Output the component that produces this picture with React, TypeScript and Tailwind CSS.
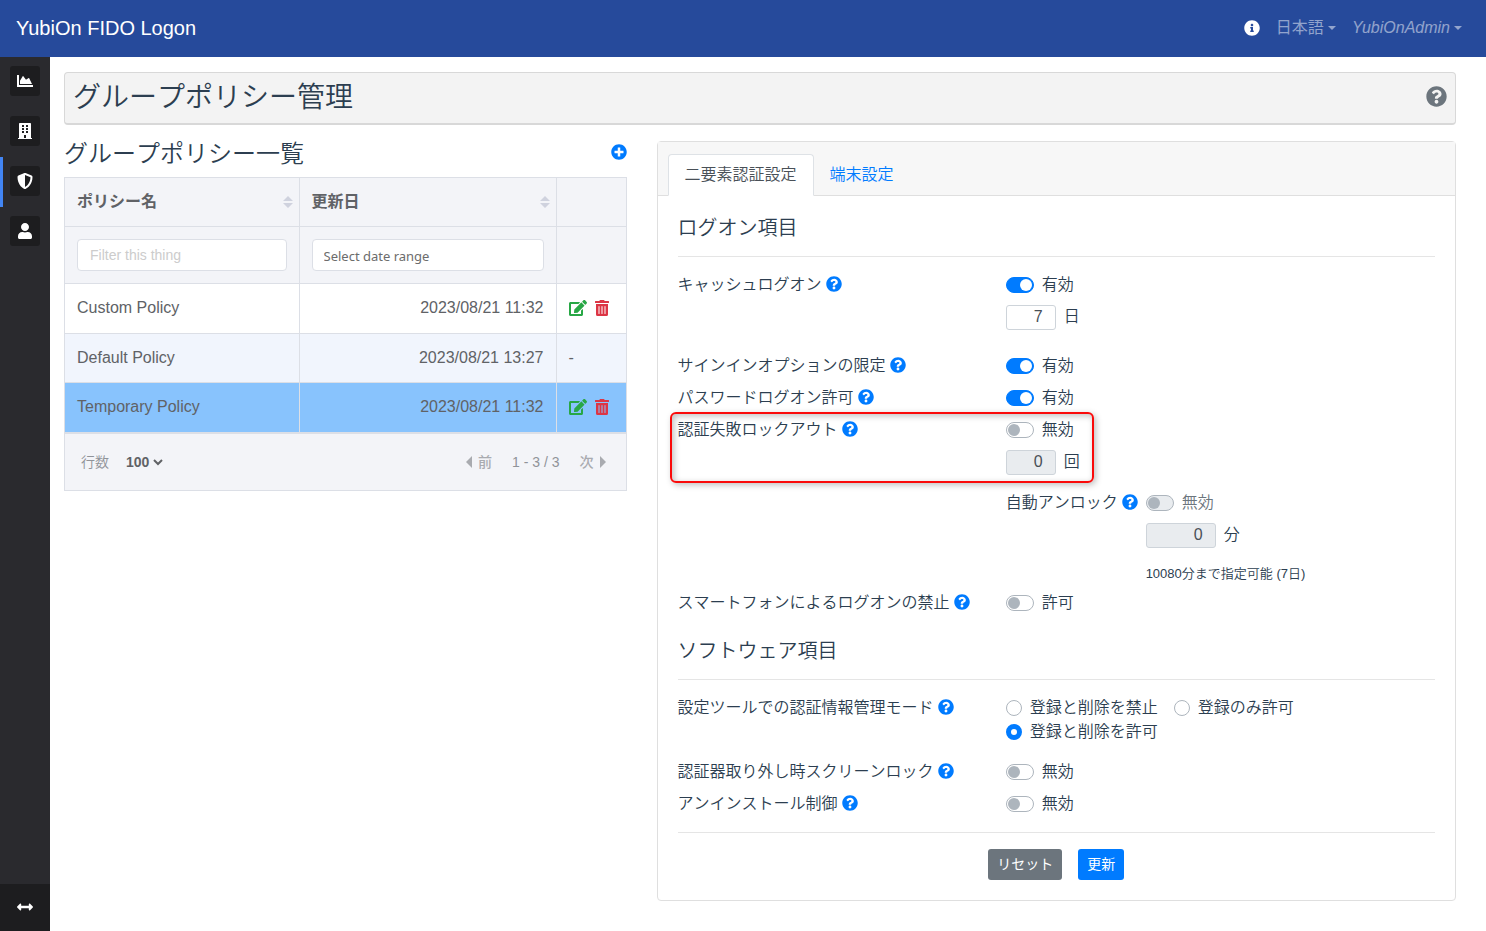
import { useId, useState } from "react"
import type { ReactNode } from "react"
import clsx from "clsx"
import {
  FaArrowsAltH,
  FaBuilding,
  FaChartArea,
  FaEdit,
  FaInfoCircle,
  FaPlusCircle,
  FaQuestionCircle,
  FaShieldAlt,
  FaTrashAlt,
  FaUser,
} from "react-icons/fa"

interface Policy {
  name: string
  updated: string
  editable: boolean
}

const policies: Policy[] = [
  { name: "Custom Policy", updated: "2023/08/21 11:32", editable: true },
  { name: "Default Policy", updated: "2023/08/21 13:27", editable: false },
  { name: "Temporary Policy", updated: "2023/08/21 11:32", editable: true },
]

const navItems = [
  { label: "ダッシュボード", icon: FaChartArea },
  { label: "組織", icon: FaBuilding },
  { label: "グループポリシー", icon: FaShieldAlt },
  { label: "ユーザー", icon: FaUser },
]

const modes = ["登録と削除を禁止", "登録のみ許可", "登録と削除を許可"]

function Caret() {
  return (
    <svg width="8" height="4" viewBox="0 0 8 4" fill="currentColor">
      <path d="M0 0h8L4 4z" />
    </svg>
  )
}

function SortIcon() {
  return (
    <svg width="10" height="12" viewBox="0 0 10 12" fill="#cfd2de">
      <path d="M0 5h10L5 0zM0 7h10L5 12z" />
    </svg>
  )
}

function Header() {
  return (
    <header className="flex h-[57px] shrink-0 items-center bg-[#264a9b] pb-0.5 pl-4 pr-6">
      <a href="#" className="text-xl text-white">
        YubiOn FIDO Logon
      </a>
      <div className="ml-auto flex items-center gap-4 text-white/50">
        <button type="button" aria-label="情報" className="text-white">
          <FaInfoCircle size={16} />
        </button>
        <button type="button" className="flex items-center gap-1">
          日本語
          <Caret />
        </button>
        <button type="button" className="flex items-center gap-1 italic">
          YubiOnAdmin
          <Caret />
        </button>
      </div>
    </header>
  )
}

function Sidebar() {
  return (
    <nav className="flex w-[50px] shrink-0 flex-col bg-[#2a2a2e]">
      {navItems.map(({ label, icon: Icon }, i) => (
        <a
          key={label}
          href="#"
          aria-label={label}
          className={clsx(
            "flex h-[50px] justify-center border-l-3 pr-[3px] pt-[9px] text-white",
            i === 2 ? "border-[#4285f4]" : "border-transparent",
          )}
        >
          <span className="flex size-[30px] shrink-0 items-center justify-center rounded-[3px] bg-[#1d1d1f]">
            <Icon size={16} />
          </span>
        </a>
      ))}
      <button
        type="button"
        aria-label="メニューを開く"
        className="mt-auto flex h-[47px] items-center justify-center bg-[#1d1d1f] pb-0.5 text-white"
      >
        <FaArrowsAltH size={16} />
      </button>
    </nav>
  )
}

function PolicyTable() {
  return (
    <div className="text-[#606266]">
      <table className="w-full table-fixed border-collapse border border-[#dcdfe6]">
        <colgroup>
          <col />
          <col className="w-[257px]" />
          <col className="w-[70px]" />
        </colgroup>
        <thead className="bg-[#f3f4f8]">
          <tr className="h-[49px]">
            {["ポリシー名", "更新日"].map((title) => (
              <th key={title} className="border border-[#dcdfe6] pl-3 pr-1.5 text-left font-bold">
                <button type="button" className="flex w-full items-center justify-between">
                  {title}
                  <SortIcon />
                </button>
              </th>
            ))}
            <th className="border border-[#dcdfe6]" />
          </tr>
          <tr className="h-[57px]">
            <th className="border border-[#dcdfe6] px-3">
              <input
                type="text"
                aria-label="ポリシー名"
                placeholder="Filter this thing"
                className="block h-8 w-full rounded border border-[#dcdfe6] bg-white px-3 text-sm font-normal placeholder:text-[#ccc]"
              />
            </th>
            <th className="border border-[#dcdfe6] px-3">
              <input
                type="text"
                aria-label="更新日"
                placeholder="Select date range"
                className="block h-8 w-full rounded border border-[#dcdfe6] bg-white px-[11px] pt-0.5 font-['Noto_Sans',sans-serif] text-[13px] font-normal placeholder:text-[#6c6c6c]"
              />
            </th>
            <th className="border border-[#dcdfe6]" />
          </tr>
        </thead>
        <tbody>
          {policies.map((policy, i) => (
            <tr
              key={policy.name}
              className={clsx(
                i === 0 && "h-[50px]",
                i === 1 && "h-[49px] bg-[#f1f5fd]",
                i === 2 && "h-[50px] bg-[#88c3fd]",
              )}
            >
              <td className="border border-[#dcdfe6] px-3 pb-px">{policy.name}</td>
              <td className="border border-[#dcdfe6] px-3 pb-px text-right">{policy.updated}</td>
              <td className="border border-[#dcdfe6] px-3 pb-px">
                {policy.editable ? (
                  <div className="flex items-center gap-2">
                    <button type="button" aria-label="編集" className="text-[#28a745]">
                      <FaEdit className="h-4 w-[18px]" />
                    </button>
                    <button type="button" aria-label="削除" className="text-[#dc3545]">
                      <FaTrashAlt className="h-4 w-3.5" />
                    </button>
                  </div>
                ) : (
                  "-"
                )}
              </td>
            </tr>
          ))}
        </tbody>
      </table>

      <div className="flex h-[58px] items-center border border-[#dcdfe6] bg-[#f3f4f8] pl-4 pr-5 text-sm text-[#909399]">
        <label htmlFor="rows">行数</label>
        <select id="rows" className="ml-[13px] font-bold text-[#606266]">
          <option>100</option>
        </select>
        <button type="button" className="ml-auto flex items-center gap-1.5 font-medium text-[#a9abb0]">
          <svg width="6" height="12" viewBox="0 0 6 12" fill="currentColor">
            <path d="M6 0v12L0 6z" />
          </svg>
          前
        </button>
        <span className="mx-5">1 - 3 / 3</span>
        <button type="button" className="flex items-center gap-1.5 font-medium text-[#a9abb0]">
          次
          <svg width="6" height="12" viewBox="0 0 6 12" fill="currentColor">
            <path d="M0 0v12l6-6z" />
          </svg>
        </button>
      </div>
    </div>
  )
}

function Help() {
  return (
    <button type="button" aria-label="ヘルプ" className="mb-0.5 ml-1 shrink-0 text-[#007bff]">
      <FaQuestionCircle size={16} />
    </button>
  )
}

interface SwitchProps {
  label: string
  on?: boolean
  disabled?: boolean
  texts?: [string, string]
}

function Switch({ label, on = false, disabled, texts = ["無効", "有効"] }: SwitchProps) {
  const [checked, setChecked] = useState(on)

  return (
    <label className={clsx("flex h-6 items-center gap-2", disabled && "text-[#6c757d]")}>
      <input
        type="checkbox"
        role="switch"
        aria-label={label}
        checked={checked}
        disabled={disabled}
        onChange={(e) => setChecked(e.target.checked)}
        className="flex h-4 w-7 appearance-none items-center rounded-full border border-[#adb5bd] bg-white px-px before:size-3 before:rounded-full before:bg-[#adb5bd] checked:border-[#007bff] checked:bg-[#007bff] checked:before:translate-x-3 checked:before:bg-white disabled:bg-[#e9ecef]"
      />
      {texts[checked ? 1 : 0]}
    </label>
  )
}

interface AmountProps {
  value: number
  unit: string
  width: string
  disabled?: boolean
}

function Amount({ value, unit, width, disabled }: AmountProps) {
  const id = useId()

  return (
    <div className="mt-2 flex h-[25px] items-center gap-2">
      <input
        id={id}
        type="number"
        defaultValue={value}
        disabled={disabled}
        className={clsx(
          "h-full rounded-[3px] border border-[#ced4da] bg-white pb-0.5 pr-3 text-right text-[#495057] [appearance:textfield] disabled:bg-[#e9ecef] [&::-webkit-inner-spin-button]:appearance-none",
          width,
        )}
      />
      <label htmlFor={id} className="pb-0.5">
        {unit}
      </label>
    </div>
  )
}

function Row({ label, className, children }: { label: string; className: string; children: ReactNode }) {
  return (
    <div className={clsx("relative grid grid-cols-12 gap-x-[30px]", className)}>
      <div className="col-span-5 flex h-6 items-center whitespace-nowrap">
        {label}
        <Help />
      </div>
      <div className="col-span-7">{children}</div>
    </div>
  )
}

function PolicySettings() {
  return (
    <section className="rounded border border-[#dfdfdf] bg-white [font-kerning:none]">
      <div className="flex h-[54px] items-end border-b border-[#dfdfdf] bg-[#f7f7f7] pl-2.5">
        <button
          type="button"
          className="-mb-px h-[42px] rounded-t border border-[#dee2e6] border-b-white bg-white px-4 text-[#495057]"
        >
          二要素認証設定
        </button>
        <button type="button" className="h-[41px] px-4 text-[#007bff]">
          端末設定
        </button>
      </div>

      <form className="p-5">
        <h5 className="text-xl leading-6">ログオン項目</h5>
        <hr className="my-4 border-black/10" />

        <Row label="キャッシュログオン" className="mb-6">
          <Switch label="キャッシュログオン" on />
          <Amount value={7} unit="日" width="w-[50px]" />
        </Row>
        <Row label="サインインオプションの限定" className="mb-2">
          <Switch label="サインインオプションの限定" on />
        </Row>
        <Row label="パスワードログオン許可" className="mb-2">
          <Switch label="パスワードログオン許可" on />
        </Row>
        <Row label="認証失敗ロックアウト" className="mb-4">
          <Switch label="認証失敗ロックアウト" />
          <Amount value={0} unit="回" width="w-[50px]" disabled />
          <div className="pointer-events-none absolute -left-2 -top-1.5 h-[71px] w-[424px] rounded-md border-2 border-[#fa0a0a] shadow-[2px_2px_6px_rgba(0,0,0,0.25),inset_2px_2px_6px_rgba(0,0,0,0.25)]" />
        </Row>

        <div className="mb-2 grid grid-cols-12 gap-x-[30px]">
          <div className="col-span-7 col-start-6 flex gap-2">
            <div className="flex h-6 items-center whitespace-nowrap">
              自動アンロック
              <Help />
            </div>
            <div>
              <Switch label="自動アンロック" disabled />
              <Amount value={0} unit="分" width="w-[70px]" disabled />
              <p className="mt-4 text-[13px] leading-[19px]">10080分まで指定可能 (7日)</p>
            </div>
          </div>
        </div>

        <Row label="スマートフォンによるログオンの禁止" className="mb-6">
          <Switch label="スマートフォンによるログオンの禁止" texts={["許可", "禁止"]} />
        </Row>

        <h5 className="text-xl leading-6">ソフトウェア項目</h5>
        <hr className="my-4 border-black/10" />

        <Row label="設定ツールでの認証情報管理モード" className="mb-4">
          <div className="flex flex-wrap gap-x-4">
            {modes.map((mode, i) => (
              <label key={mode} className="flex h-6 items-center gap-2">
                <input
                  type="radio"
                  name="mode"
                  defaultChecked={i === 2}
                  className="size-4 appearance-none rounded-full border border-[#adb5bd] bg-white checked:border-[5px] checked:border-[#007bff]"
                />
                {mode}
              </label>
            ))}
          </div>
        </Row>
        <Row label="認証器取り外し時スクリーンロック" className="mb-2">
          <Switch label="認証器取り外し時スクリーンロック" />
        </Row>
        <Row label="アンインストール制御" className="mb-4">
          <Switch label="アンインストール制御" />
        </Row>

        <hr className="mb-4 border-black/10" />
        <div className="flex justify-center gap-4 text-sm font-normal text-white">
          <button type="reset" className="h-[31px] rounded-[3px] bg-[#6c757d] px-[9px] pb-0.5">
            リセット
          </button>
          <button type="button" className="h-[31px] rounded-[3px] bg-[#007bff] px-[9px] pb-0.5">
            更新
          </button>
        </div>
      </form>
    </section>
  )
}

export default function App() {
  return (
    <div className="flex min-h-screen flex-col bg-white font-['Liberation_Sans','Noto_Sans_CJK_JP',sans-serif] text-base text-[#2c3e50]">
      <Header />
      <div className="flex flex-1">
        <Sidebar />
        <main className="min-w-0 flex-1 pb-[30px] pl-3.5 pr-[30px] pt-[15px]">
          <div className="flex h-[53px] items-center justify-between rounded border border-b-2 border-[#d8d8d8] bg-[#f3f3f3] px-2">
            <h3 className="text-[28px] leading-8 font-[350] [font-kerning:none]">グループポリシー管理</h3>
            <button type="button" aria-label="ヘルプ" className="mb-1 text-[#6c757d]">
              <FaQuestionCircle size={21} />
            </button>
          </div>

          <div className="mt-4 grid grid-cols-12 items-start gap-[30px] font-[350]">
            <section className="col-span-5">
              <div className="mb-2 flex h-7 items-center justify-between pb-0.5">
                <h4 className="text-2xl leading-7 [font-kerning:none]">グループポリシー一覧</h4>
                <button type="button" aria-label="追加" className="mb-1 text-[#007bff]">
                  <FaPlusCircle size={16} />
                </button>
              </div>
              <PolicyTable />
            </section>
            <div className="col-span-7">
              <PolicySettings />
            </div>
          </div>
        </main>
      </div>
    </div>
  )
}
